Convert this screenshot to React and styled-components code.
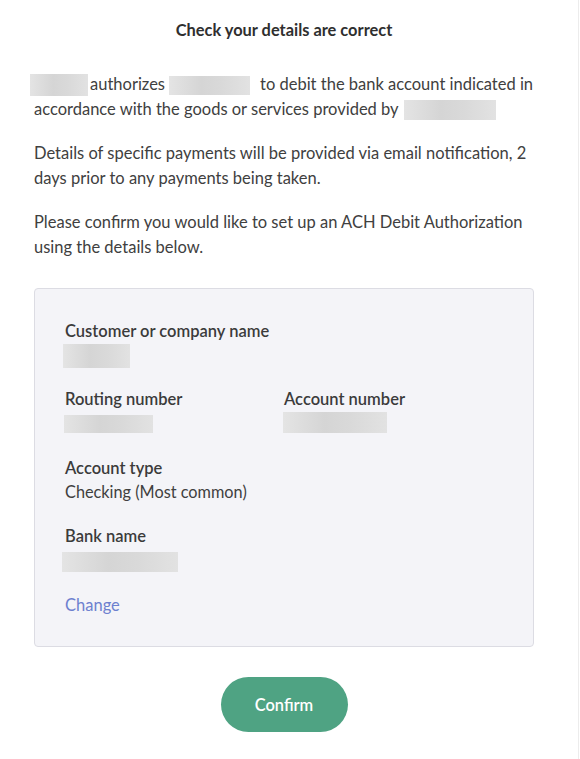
import React from "react";
import styled, { createGlobalStyle } from "styled-components";

const GlobalStyle = createGlobalStyle`
  html, body {
    margin: 0;
    padding: 0;
    background: #fff;
  }
  body {
    font-family: Lato, "Open Sans", sans-serif;
    color: #3d3d3d;
  }
`;

const Page = styled.div`
  width: 579px;
  min-height: 759px;
  box-sizing: border-box;
  background: #fff;
  border-right: 1px solid #ececec;
  padding: 19px 30px 0 34px;
`;

const Title = styled.h1`
  margin: 0 0 30.5px;
  text-align: center;
  font-size: 16.4px;
  font-weight: 700;
  color: #2f2f2f;
  line-height: 22px;
  width: 500px;
`;

const Para = styled.p`
  margin: 0 0 19px;
  font-size: 16.5px;
  line-height: 25px;
  color: #404040;
`;

const Redact = styled.span`
  display: inline-block;
  vertical-align: middle;
  width: ${(p) => p.$w}px;
  height: ${(p) => p.$h || 19}px;
  margin: ${(p) => p.$m || "0"};
  background: linear-gradient(90deg, #e4e4e4 0%, #d5d5d5 40%, #d9d9d9 65%, #e2e2e2 100%);
`;

const Card = styled.div`
  margin-top: 28px;
  width: 500px;
  box-sizing: border-box;
  background: #f4f4f8;
  border: 1px solid #dcdce3;
  border-radius: 4px;
  padding: 31px 30px 30px;
`;

const Row = styled.div`
  display: grid;
  grid-template-columns: 219px 1fr;
  height: 68.5px;
  align-items: start;
`;

const Field = styled.div`
  display: flex;
  flex-direction: column;
  align-items: flex-start;
`;

const Label = styled.div`
  font-size: 16.5px;
  font-weight: 600;
  color: #3b3b3b;
  line-height: 22px;
`;

const Value = styled.div`
  font-size: 16.3px;
  color: #404040;
  line-height: 22px;
  margin-top: 2px;
`;

const Link = styled.a`
  display: block;
  font-size: 16.5px;
  color: #6d80cf;
  text-decoration: none;
  line-height: 22px;
`;

const Actions = styled.div`
  display: flex;
  justify-content: center;
  width: 500px;
  padding-top: 30px;
`;

const ConfirmButton = styled.button`
  width: 127px;
  height: 55px;
  border: none;
  border-radius: 28px;
  background: #4fa383;
  color: #fff;
  font-family: Lato, "Open Sans", sans-serif;
  font-size: 16.4px;
  font-weight: 600;
  cursor: pointer;
`;

export default function App() {
  return (
    <>
      <GlobalStyle />
      <Page>
        <Title>Check your details are correct</Title>
        <Para>
          <Redact $w={58} $h={22} $m="0 2px 0 -4px" />authorizes
          <Redact $w={81} $m="0 10px 0 4px" />to debit the bank account indicated in
          accordance with the goods or services provided by
          <Redact $w={92} $h={20} $m="0 0 0 5px" />
        </Para>
        <Para>
          Details of specific payments will be provided via email notification, 2
          days prior to any payments being taken.
        </Para>
        <Para>
          Please confirm you would like to set up an ACH Debit Authorization
          using the details below.
        </Para>
        <Card>
          <Row>
            <Field>
              <Label>Customer or company name</Label>
              <Redact $w={67} $h={24} $m="2px 0 0 -2px" />
            </Field>
          </Row>
          <Row>
            <Field>
              <Label>Routing number</Label>
              <Redact $w={89} $h={18} $m="5px 0 0 -1px" />
            </Field>
            <Field>
              <Label>Account number</Label>
              <Redact $w={104} $h={21} $m="2px 0 0 -1px" />
            </Field>
          </Row>
          <Row>
            <Field>
              <Label>Account type</Label>
              <Value>Checking (Most common)</Value>
            </Field>
          </Row>
          <Row>
            <Field>
              <Label>Bank name</Label>
              <Redact $w={116} $h={20} $m="5px 0 0 -3px" />
            </Field>
          </Row>
          <Link href="#">Change</Link>
        </Card>
        <Actions>
          <ConfirmButton>Confirm</ConfirmButton>
        </Actions>
      </Page>
    </>
  );
}
